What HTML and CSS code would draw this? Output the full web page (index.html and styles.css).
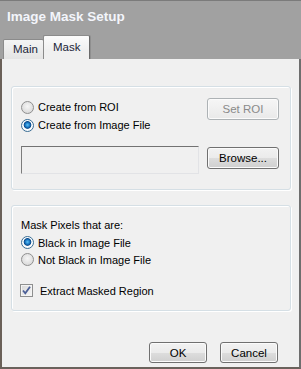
FILE: index.html
```html
<!DOCTYPE html>
<html lang="en">
<head>
  <meta charset="UTF-8" />
  <title>Image Mask Setup</title>
  <link rel="stylesheet" href="styles.css">
</head>
<body>
  <div class="window">
    <div class="titlebar">
      <div class="title">Image Mask Setup</div>
      <div class="tabs">
        <div class="tab">Main</div>
        <div class="tab active">Mask</div>
      </div>
    </div>

    <div class="panel">
      <div class="group source">
        <div class="source-left">
          <label class="option"><span class="radio"></span>Create from ROI</label>
          <label class="option"><span class="radio checked"></span>Create from Image File</label>
          <div class="field"></div>
        </div>
        <div class="source-right">
          <button class="btn" disabled>Set ROI</button>
          <button class="btn browse">Browse...</button>
        </div>
      </div>

      <div class="group pixels">
        <div class="caption">Mask Pixels that are:</div>
        <label class="option small"><span class="radio checked"></span>Black in Image File</label>
        <label class="option small"><span class="radio"></span>Not Black in Image File</label>
        <label class="option small check-row">
          <span class="checkbox">
            <svg width="11" height="11" viewBox="0 0 11 11"><path d="M2 5.5 L4.3 8.3 L9 1.8" fill="none" stroke="#4b5f97" stroke-width="1.8"/></svg>
          </span>
          Extract Masked Region
        </label>
      </div>

      <div class="footer">
        <button class="btn dlg">OK</button>
        <button class="btn dlg">Cancel</button>
      </div>
    </div>
  </div>
</body>
</html>
```

FILE: styles.css
```css
body {
  margin: 0;
  font-family: 'Liberation Sans', Arial, sans-serif;
  font-size: 11px;
  color: #000;
  background: #f0f0f0;
}

.window {
  width: 301px;
  height: 369px;
  display: flex;
  flex-direction: column;
}

/* title strip with the tab headers */
.titlebar {
  height: 59px;
  box-sizing: border-box;
  background: #a1a1a1;
  border-top: 1px solid #7b7b7b;
  display: flex;
  flex-direction: column;
  justify-content: space-between;
}

.title {
  padding: 8px 0 0 7px;
  font-size: 13.5px;
  line-height: 16px;
  font-weight: bold;
  color: #f3f5fb;
}

.tabs {
  display: flex;
  align-items: flex-end;
  padding-left: 3px;
}

.tab {
  box-sizing: border-box;
  width: 41px;
  height: 20px;
  line-height: 19px;
  padding-left: 9px;
  background: linear-gradient(#f4f4f4, #e4e4e4);
  border: 1px solid #8b8b8b;
  border-bottom: none;
  border-radius: 2px 2px 0 0;
  color: #1b2538;
  font-size: 11.5px;
}

.tab.active {
  width: 47px;
  height: 24px;
  line-height: 23px;
  margin-left: -1px;
  background: linear-gradient(#fbfbfb, #f0f0f0 60%);
  border-right-color: #6a6a6a;
  box-shadow: 1px 0 0 #8f8f8f;
}

.panel {
  flex: 1;
  background: #f0f0f0;
  border-left: 2px solid #6a6058;
  border-right: 2px solid #6e6e6e;
  border-bottom: 2px solid #6a625c;
  padding: 27px 8px 0 9px;
}

.group {
  border: 1px solid #d5dfe5;
  border-radius: 3px;
  box-shadow: inset 1px 1px 0 #fff, 1px 1px 0 #fff;
  box-sizing: border-box;
}

.source {
  height: 104px;
  padding: 11px 10px 0 9px;
  display: flex;
  gap: 8px;
}

.source-left {
  width: 178px;
}

.source-right {
  display: flex;
  flex-direction: column;
}

.option {
  display: flex;
  align-items: center;
  height: 18px;
}

.option.small {
  height: 17px;
}

.radio {
  width: 11px;
  height: 11px;
  border: 1px solid #8f8f8f;
  border-radius: 50%;
  margin-right: 4px;
  background: radial-gradient(circle at 50% 40%, #f6f6f6 0, #e0e0e0 60%, #d2d2d2 100%);
}

.radio.checked {
  border-color: #3a6d94;
  background: radial-gradient(circle at 50% 45%, #5fc4f5 0, #1f7fcb 25%, #0b4b8c 42%, #fff 52%, #e4eef5 100%);
}

.field {
  box-sizing: border-box;
  margin-top: 12px;
  height: 28px;
  border-top: 1px solid #727272;
  border-left: 1px solid #7c7c7c;
  border-right: 1px solid #e2e3e6;
  border-bottom: 1px solid #e2e3e6;
  background: #f0f0f0;
}

.btn {
  box-sizing: border-box;
  width: 72px;
  height: 22px;
  padding: 0;
  font-family: inherit;
  font-size: 11.5px;
  color: #000;
  border: 1px solid #707070;
  border-radius: 3px;
  background: linear-gradient(#f2f2f2 0%, #ebebeb 50%, #dddddd 51%, #cfcfcf 100%);
  box-shadow: inset 0 0 0 1px #fbfbfb;
}

.btn:disabled {
  color: #8a8a8a;
  border-color: #adb2b5;
  background: linear-gradient(#f6f6f6, #e9e9e9);
}

.browse {
  margin-top: 27px;
}

.pixels {
  margin-top: 15px;
  height: 106px;
  padding: 10px 9px 0 9px;
}

.caption {
  height: 18px;
  line-height: 18px;
}

.check-row {
  margin-top: 14px;
}

.checkbox {
  box-sizing: border-box;
  width: 13px;
  height: 13px;
  margin: 0 7px 0 -1px;
  border: 1px solid #8e8f8f;
  background: linear-gradient(135deg, #d6d6d6, #f8f8f8);
  box-shadow: inset 0 0 0 1px #f4f4f4;
  display: flex;
  align-items: center;
  justify-content: center;
}

.footer {
  display: flex;
  justify-content: flex-end;
  gap: 13px;
  margin: 31px 13px 0 0;
}

.btn.dlg {
  width: 58px;
  height: 21px;
}
```
